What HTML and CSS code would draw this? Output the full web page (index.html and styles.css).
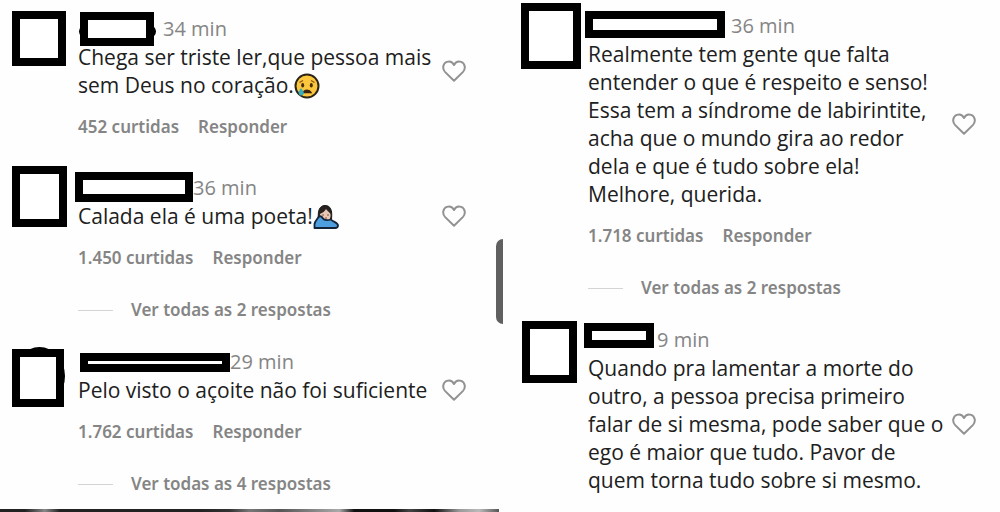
FILE: index.html
```html
<!DOCTYPE html>
<html lang="pt-BR">
<head>
<meta charset="utf-8">
<meta name="viewport" content="width=device-width, initial-scale=1">
<title>Comentários</title>
<link rel="stylesheet" href="styles.css">
</head>
<body>
<svg class="defs" aria-hidden="true">
  <symbol id="heart" viewBox="0 0 24 22"><path d="M12 20.7 3.2 12.1C-.2 8.6 1 3.4 4.8 1.9 7.800.8 10.600 2.200 12 5c1.400-2.800 4.200-4.200 7.200-3.100 3.800 1.500 5 6.700 1.600 10.200Z" fill="none" stroke="#929292" stroke-width="2" stroke-linejoin="round"/></symbol>
</svg>
<main class="page">
  <section class="panel panel-left">
    <article class="comment comment-short">
      <div class="avatar avatar-a"></div>
      <div class="content">
        <header class="head"><span class="name name-a"></span><time class="time">34 min</time></header>
        <div class="row">
          <p class="text">Chega ser triste ler,que pessoa mais<br>sem Deus no coração.<svg class="emoji" viewBox="0 0 26 26" role="img" aria-label="Rosto chorando"><circle cx="13" cy="13" r="11.500" fill="#fcc63d" stroke="#2b2418" stroke-width="2"/><path d="M5.500 9.500 9 7.500M20.500 9.500 17 7.500" stroke="#8b571c" stroke-width="1.300" fill="none"/><ellipse cx="8.700" cy="12.300" rx="1.500" ry="2.200" fill="#4a2d14"/><ellipse cx="17.300" cy="12.300" rx="1.500" ry="2.200" fill="#4a2d14"/><path d="M9.500 19.500C10.500 16.500 15.500 16.500 17 19.500Z" fill="#3b2412" stroke="#3b2412" stroke-width="1.500"/><path d="M7 15C5.500 17 4 19 5 21.200 6.500 23.500 10 22.600 9.800 20 9.700 18 8 17 7 15Z" fill="#36aebb"/></svg></p>
          <button class="like" aria-label="Curtir"><svg class="heart"><use href="#heart"/></svg></button>
        </div>
        <div class="meta"><button>452 curtidas</button><button>Responder</button></div>
      </div>
    </article>
    <article class="comment">
      <div class="avatar avatar-b"></div>
      <div class="content">
        <header class="head"><span class="name name-b"></span><time class="time">36 min</time></header>
        <div class="row">
          <p class="text">Calada ela é uma poeta!<svg class="emoji" viewBox="0 0 26 26" role="img" aria-label="Pessoa com a mão no rosto"><path d="M5.500 15C4.500 7 6.500 1.500 12 1.500S19.500 6 18.500 15Z" fill="#28211f" stroke="#171717"/><path d="M7 10C9.500 9 12 7 13 5c1 2 3.500 3 4.500 5 .500 4-1.500 8-5 8S6.500 14 7 10Z" fill="#e8c8b5"/><path d="M9 11h2M14 11h2M12 14h2" stroke="#79564a"/><path d="M1.500 24V20C2 17 4 15.500 5.500 13 7 11.500 9 12.500 9.500 14 11 16.500 14 16.500 18 15.500 20 18 25 18.500 25 21.500 25 23.500 23.500 24 22 24Z" fill="#4e9fe0" stroke="#142337" stroke-width="1.800" stroke-linejoin="round"/></svg></p>
          <button class="like" aria-label="Curtir"><svg class="heart"><use href="#heart"/></svg></button>
        </div>
        <div class="meta"><button>1.450 curtidas</button><button>Responder</button></div>
        <button class="replies">Ver todas as 2 respostas</button>
      </div>
    </article>
    <article class="comment">
      <div class="avatar avatar-c"></div>
      <div class="content">
        <header class="head"><span class="name name-c"></span><time class="time">29 min</time></header>
        <div class="row">
          <p class="text">Pelo visto o açoite não foi suficiente</p>
          <button class="like" aria-label="Curtir"><svg class="heart"><use href="#heart"/></svg></button>
        </div>
        <div class="meta"><button>1.762 curtidas</button><button>Responder</button></div>
        <button class="replies">Ver todas as 4 respostas</button>
      </div>
    </article>
    <div class="strip"></div>
  </section>
  <section class="panel panel-right">
    <article class="comment">
      <div class="avatar avatar-d"></div>
      <div class="content">
        <header class="head"><span class="name name-d"></span><time class="time">36 min</time></header>
        <div class="row">
          <p class="text">Realmente tem gente que falta<br>entender o que é respeito e senso!<br>Essa tem a síndrome de labirintite,<br>acha que o mundo gira ao redor<br>dela e que é tudo sobre ela!<br>Melhore, querida.</p>
          <button class="like" aria-label="Curtir"><svg class="heart"><use href="#heart"/></svg></button>
        </div>
        <div class="meta"><button>1.718 curtidas</button><button>Responder</button></div>
        <button class="replies">Ver todas as 2 respostas</button>
      </div>
    </article>
    <article class="comment">
      <div class="avatar avatar-e"></div>
      <div class="content">
        <header class="head"><span class="name name-e"></span><time class="time">9 min</time></header>
        <div class="row">
          <p class="text">Quando pra lamentar a morte do<br>outro, a pessoa precisa primeiro<br>falar de si mesma, pode saber que o<br>ego é maior que tudo. Pavor de<br>quem torna tudo sobre si mesmo.</p>
          <button class="like" aria-label="Curtir"><svg class="heart"><use href="#heart"/></svg></button>
        </div>
      </div>
    </article>
  </section>
  <div class="scrollbar"></div>
</main>
</body>
</html>
```
FILE: styles.css
```css
* { box-sizing: border-box; }
body {
  margin: 0;
  background: #fefefe;
  color: #202020;
  font-family: "Open Sans", "Noto Sans", sans-serif;
}
.defs { position: absolute; width: 0; height: 0; }
.page {
  position: relative;
  display: grid;
  grid-template-columns: 1fr 1fr;
  min-height: 100vh;
}
.panel {
  isolation: isolate;
  display: flex;
  flex-direction: column;
}
.panel-left { padding-top: 15px; }
.panel-right { padding-top: 12px; padding-left: 10px; }
.comment {
  display: grid;
  grid-template-columns: 66px 1fr;
  padding: 0 34px 0 12px;
  margin-bottom: 26px;
}
.panel-right .comment { padding-right: 24px; }
.comment-short { margin-bottom: 35px; }
.comment:last-of-type { margin-bottom: 0; }
.avatar { position: relative; border: 8px solid #000; background: #fff; }
.avatar-a { width: 54px; height: 55px; margin-top: -4px; }
.avatar-b { width: 55px; height: 61px; margin-top: -8px; }
.avatar-c { width: 52px; height: 58px; margin-top: 1px; }
.avatar-d { width: 60px; height: 66px; margin: -9px 0 0 -1px; }
.avatar-e { width: 55px; height: 62px; margin-top: -5px; }
.avatar-c::before {
  content: "";
  position: absolute;
  z-index: -1;
  inset: -10px -9px -6px -6px;
  border-radius: 50%;
  background: #000;
}
.content { min-width: 0; }
.head { display: flex; align-items: center; height: 28px; }
.name { position: relative; flex: none; border: 8px solid #000; background: #fff; }
.name-a { width: 74px; height: 34px; margin: 0 9px 0 2px; }
.name-a::before {
  content: "";
  position: absolute;
  z-index: -1;
  inset: 5px -10px 0 -9px;
  border-radius: 8px;
  background: #000;
}
.name-b { width: 118px; height: 30px; margin: 0 0 2px -3px; }
.name-c { width: 150px; height: 19px; margin: 0 0 0 2px; }
.name-d { width: 140px; height: 27px; margin: 0 6px 4px -3px; }
.name-e { width: 70px; height: 25px; margin: 0 3px 10px -4px; }
.time { color: #858585; font-size: 20px; line-height: 28px; }
.row { display: flex; align-items: center; justify-content: space-between; }
.text { margin: 0; font-size: 21px; line-height: 28px; white-space: nowrap; }
.emoji { width: 26px; height: 26px; margin-top: -6px; vertical-align: -6px; }
button {
  margin: 0;
  padding: 0;
  border: 0;
  background: none;
  color: #858585;
  font: 600 17px/24px "Noto Sans", "Open Sans", sans-serif;
  cursor: pointer;
}
.like { flex: none; width: 24px; height: 22px; }
.heart { display: block; width: 24px; height: 22px; }
.meta { display: flex; gap: 19px; margin-top: 16px; }
.replies { display: flex; align-items: center; gap: 18px; margin-top: 28px; }
.replies::before { content: ""; width: 35px; height: 1px; background: #d4d4d4; }
.strip {
  height: 3px;
  margin-top: auto;
  margin-right: 1px;
  background: linear-gradient(90deg, #222 0 5%, #888 9%, #222 12% 40%, #333 46%, #777 50%, #555 56%, #aaa 68%, #111 71% 79%, #444 82%, #111 87%, #999 92%, #bbb 96%, #555);
}
.scrollbar {
  position: absolute;
  left: calc(50% - 4px);
  top: 239px;
  width: 7px;
  height: 85px;
  border-radius: 7px 0 0 7px;
  background: #606060;
}
```
